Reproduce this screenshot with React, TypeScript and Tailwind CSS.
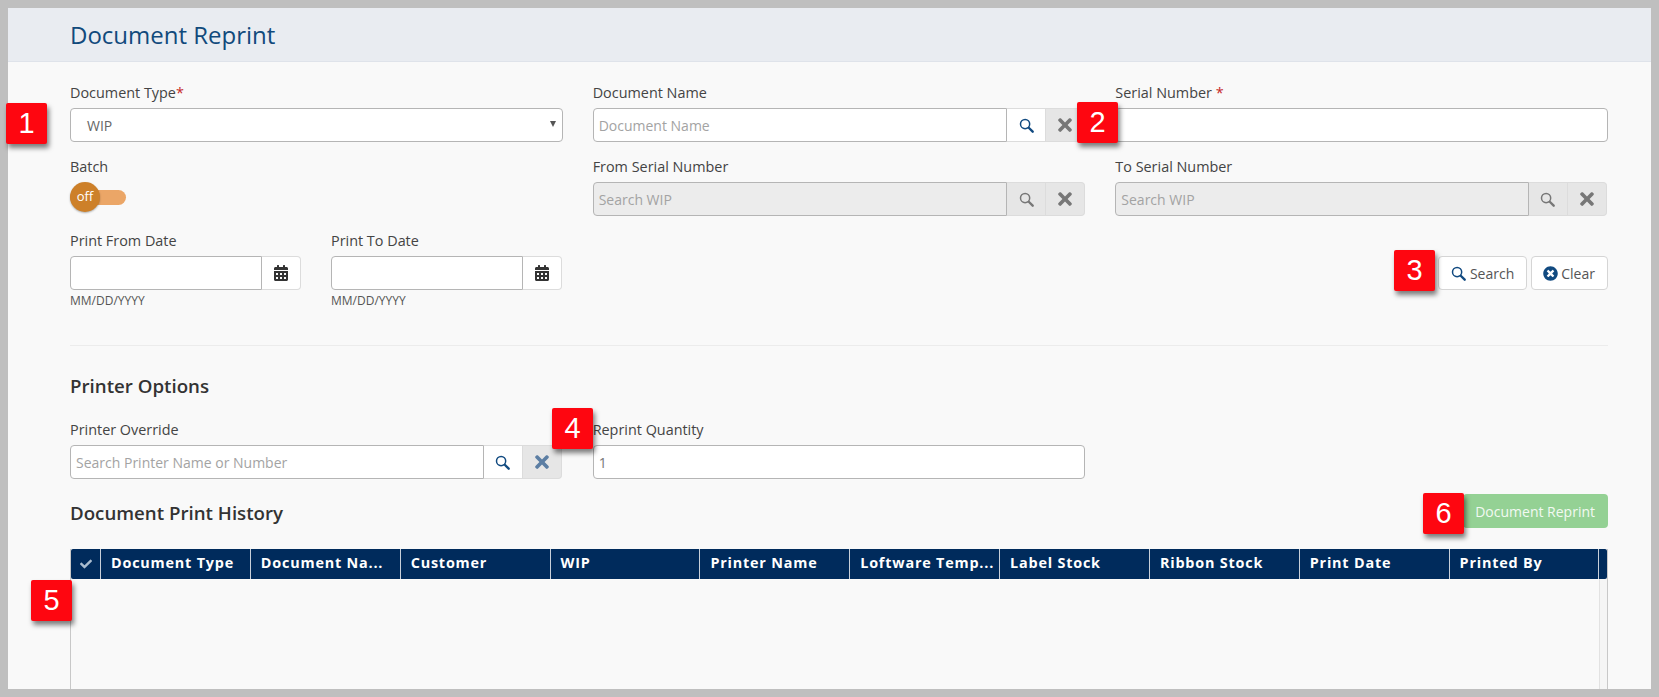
import { ReactNode } from "react";
import { FaTimes, FaTimesCircle, FaCheck, FaCalendarAlt } from "react-icons/fa";

const columns = [
  "Document Type",
  "Document Na...",
  "Customer",
  "WIP",
  "Printer Name",
  "Loftware Temp...",
  "Label Stock",
  "Ribbon Stock",
  "Print Date",
  "Printed By",
];

function SearchIcon({ className }: { className?: string }) {
  return (
    <svg viewBox="0 0 16 16" className={`w-[15px] h-[15px] ${className ?? ""}`} fill="none" stroke="currentColor">
      <circle cx="6.5" cy="6.5" r="4.9" strokeWidth="1.6" />
      <path d="M10.4 10.4 14.6 14.6" strokeWidth="2.5" strokeLinecap="round" />
    </svg>
  );
}

function Label({ children, required }: { children: ReactNode; required?: string }) {
  return (
    <div className="h-5 mb-[5px] text-[14.4px] leading-5 text-[#444] whitespace-nowrap">
      {children}
      {required && <span className="text-[#c62828]">{required}</span>}
    </div>
  );
}

function LookupField({
  placeholder,
  disabled,
  clearColor = "text-[#777]",
}: {
  placeholder: string;
  disabled?: boolean;
  clearColor?: string;
}) {
  return (
    <div className="flex h-[34px] w-full">
      <div
        className={`flex-1 min-w-0 flex items-center pl-[5px] border border-[#b5b5b5] rounded-l-[4px] text-[14px] text-[#a3a3a3] ${
          disabled ? "bg-[#ececec]" : "bg-white"
        }`}
      >
        {placeholder}
      </div>
      <div
        className={`w-[39px] flex items-center justify-center border-y border-r border-[#dcdcdc] ${
          disabled ? "bg-[#e6e6e6] text-[#777]" : "bg-white text-[#114a80]"
        }`}
      >
        <SearchIcon />
      </div>
      <div className="w-[39px] flex items-center justify-center bg-[#e6e6e6] border-y border-r border-[#dcdcdc] rounded-r-[4px]">
        <FaTimes size={20} className={clearColor} />
      </div>
    </div>
  );
}

function DateField({ label }: { label: string }) {
  return (
    <div className="w-[231px]">
      <Label>{label}</Label>
      <div className="flex h-[34px]">
        <div className="flex-1 bg-white border border-[#b5b5b5] rounded-l-[4px]" />
        <div className="w-[39px] flex items-center justify-center bg-white border-y border-r border-[#dcdcdc] rounded-r-[4px] text-[#333]">
          <FaCalendarAlt size={16} />
        </div>
      </div>
      <div className="mt-[4px] text-[12px] leading-[14px] text-[#555]">MM/DD/YYYY</div>
    </div>
  );
}

function Badge({ n, className }: { n: number; className: string }) {
  return (
    <div
      className={`absolute w-[41px] h-[41px] flex items-center justify-center bg-[#fe0610] rounded-[2px] text-white text-[29px] shadow-[2px_4px_5px_rgba(0,0,0,0.5)] font-['Liberation_Sans',Arial,sans-serif] ${className}`}
    >
      {n}
    </div>
  );
}

export default function App() {
  return (
    <div className="relative h-[697px] overflow-hidden bg-[#bfbfbf] pt-2 pb-2 pl-2 pr-[8px] font-['Open_Sans',sans-serif]">
      <div className="flex flex-col h-full bg-[#f9f9f9]">
        <div className="h-[54px] shrink-0 flex items-center pl-[62px] bg-[#e9ecf1] border-b border-[#dfe3ea]">
          <h1 className="text-[24px] text-[#114a7c]">Document Reprint</h1>
        </div>

        <div className="flex flex-col flex-1 min-h-0 pl-[62px] pr-[43px] pt-[21px]">
          {/* Search form */}
          <div className="grid grid-cols-3 gap-x-[30px] gap-y-[15px]">
            <div>
              <Label required="*">Document Type</Label>
              <div className="relative flex items-center h-[34px] pl-4 bg-white border border-[#b5b5b5] rounded-[4px] text-[14px] text-[#666]">
                WIP
                <span className="absolute right-[6px] top-[12px] w-0 h-0 border-x-[3px] border-x-transparent border-t-[6px] border-t-[#555]" />
              </div>
            </div>
            <div>
              <Label>Document Name</Label>
              <LookupField placeholder="Document Name" />
            </div>
            <div>
              <Label required=" *">Serial Number</Label>
              <div className="h-[34px] bg-white border border-[#b5b5b5] rounded-[4px]" />
            </div>

            <div>
              <Label>Batch</Label>
              <div className="relative w-[56px] h-[34px] flex items-start">
                <div className="mt-[8px] w-full h-[15px] bg-[#eba667] rounded-full" />
                <div className="absolute left-0 top-0 w-[30px] h-[30px] flex items-center justify-center rounded-full bg-[#cd8029] text-white text-[13px] shadow-[0_1px_2px_rgba(0,0,0,0.3)]">
                  off
                </div>
              </div>
            </div>
            <div>
              <Label>From Serial Number</Label>
              <LookupField placeholder="Search WIP" disabled />
            </div>
            <div className="pr-[1px]">
              <Label>To Serial Number</Label>
              <LookupField placeholder="Search WIP" disabled />
            </div>

            <div className="flex gap-[30px]">
              <DateField label="Print From Date" />
              <DateField label="Print To Date" />
            </div>
            <div />
            <div className="flex justify-end gap-[4px] pt-[25px]">
              <button className="flex items-center gap-[4px] h-[34px] px-[12px] bg-white border border-[#d5d5d5] rounded-[4px] text-[14px] text-[#555]">
                <SearchIcon className="text-[#114a80]" />
                Search
              </button>
              <button className="flex items-center gap-[3px] h-[34px] pl-[11px] pr-[12px] bg-white border border-[#d5d5d5] rounded-[4px] text-[14px] text-[#555]">
                <FaTimesCircle size={15} className="text-[#114a80]" />
                Clear
              </button>
            </div>
          </div>

          <div className="mt-[37px] border-t border-[#ececec]" />

          {/* Printer options */}
          <h2 className="mt-[27px] text-[18.7px] leading-[26px] font-semibold text-[#333]">Printer Options</h2>
          <div className="mt-[21px] grid grid-cols-3 gap-x-[30px]">
            <div className="pr-[1px]">
              <Label>Printer Override</Label>
              <LookupField placeholder="Search Printer Name or Number" clearColor="text-[#5c7ea3]" />
            </div>
            <div>
              <Label>Reprint Quantity</Label>
              <div className="flex items-center h-[34px] pl-[5px] bg-white border border-[#b5b5b5] rounded-[4px] text-[14px] text-[#777]">
                1
              </div>
            </div>
          </div>

          {/* Print history */}
          <div className="mt-[15px] flex items-center justify-between h-[34px]">
            <h2 className="mt-[4px] text-[18.7px] font-semibold text-[#333]">Document Print History</h2>
            <button className="h-[34px] pl-[12px] pr-[13px] bg-[#94d194] rounded-[4px] text-[14px] text-[#f2f9f2]">
              Document Reprint
            </button>
          </div>

          <div className="mt-[21px] flex flex-col flex-1 min-h-0 border-x border-[#c8c8c8]">
            <div className="flex h-[30px] shrink-0 bg-[#002b5c] rounded-[2px] text-white">
              <div className="w-[30px] shrink-0 flex items-center justify-center border-r border-[#c8d0da]">
                <FaCheck size={12} className="text-[#a9bccf]" />
              </div>
              {columns.map((col) => (
                <div
                  key={col}
                  className="w-[149.85px] shrink-0 flex items-center pl-[10px] pb-[3px] border-r border-[#c8d0da] text-[14.4px] font-bold tracking-[0.8px] whitespace-nowrap"
                >
                  {col}
                </div>
              ))}
            </div>
            <div className="flex flex-1 justify-end">
              <div className="w-[8px] bg-[#f5f5f5] border-l border-[#e2e2e2]" />
            </div>
          </div>
        </div>
      </div>

      <Badge n={1} className="left-[6px] top-[103px]" />
      <Badge n={2} className="left-[1077px] top-[102px]" />
      <Badge n={3} className="left-[1394px] top-[250px]" />
      <Badge n={4} className="left-[552px] top-[408px]" />
      <Badge n={5} className="left-[31px] top-[580px]" />
      <Badge n={6} className="left-[1423px] top-[493px]" />
    </div>
  );
}
